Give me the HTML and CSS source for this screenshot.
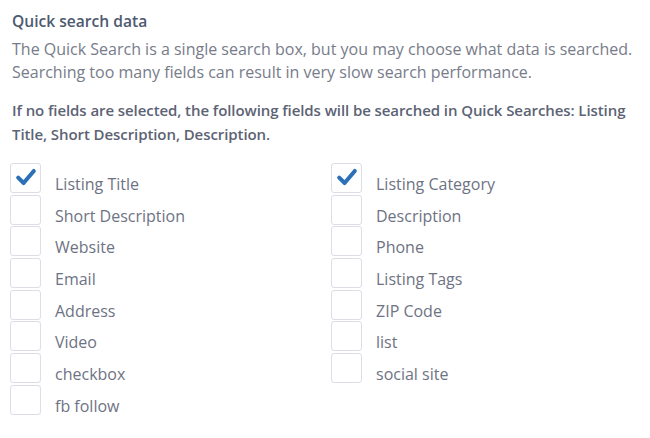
FILE: index.html
```html
<!DOCTYPE html>
<html>
<head>
<meta charset="utf-8">
<link rel="stylesheet" href="styles.css">
</head>
<body>
<div class="panel">
  <h3 class="title">Quick search data</h3>
  <p class="desc">The Quick Search is a single search box, but you may choose what data is searched. Searching too many fields can result in very slow search performance.</p>
  <p class="note">If no fields are selected, the following fields will be searched in Quick Searches: Listing Title, Short Description, Description.</p>
  <div class="fields">
    <label class="field"><span class="box checked"><svg viewBox="0 0 20 20" class="tick"><path d="M3.5 10.5 L8 15 L16.5 5" /></svg></span><span class="lbl">Listing Title</span></label>
    <label class="field"><span class="box checked"><svg viewBox="0 0 20 20" class="tick"><path d="M3.5 10.5 L8 15 L16.5 5" /></svg></span><span class="lbl">Listing Category</span></label>
    <label class="field"><span class="box"></span><span class="lbl">Short Description</span></label>
    <label class="field"><span class="box"></span><span class="lbl">Description</span></label>
    <label class="field"><span class="box"></span><span class="lbl">Website</span></label>
    <label class="field"><span class="box"></span><span class="lbl">Phone</span></label>
    <label class="field"><span class="box"></span><span class="lbl">Email</span></label>
    <label class="field"><span class="box"></span><span class="lbl">Listing Tags</span></label>
    <label class="field"><span class="box"></span><span class="lbl">Address</span></label>
    <label class="field"><span class="box"></span><span class="lbl">ZIP Code</span></label>
    <label class="field"><span class="box"></span><span class="lbl">Video</span></label>
    <label class="field"><span class="box"></span><span class="lbl">list</span></label>
    <label class="field"><span class="box"></span><span class="lbl">checkbox</span></label>
    <label class="field"><span class="box"></span><span class="lbl">social site</span></label>
    <label class="field"><span class="box"></span><span class="lbl">fb follow</span></label>
  </div>
</div>
</body>
</html>
```
FILE: styles.css
```css
html, body {
  margin: 0;
  padding: 0;
  background: #ffffff;
}
body {
  font-family: "Open Sans", "Noto Sans", sans-serif;
  font-size: 16px;
  color: #777c8a;
}
.panel {
  padding: 10px 10px 0 12px;
}
.title {
  margin: 0;
  font-size: 15.6px;
  font-weight: 600;
  line-height: 22px;
  color: #4e5a70;
}
.desc {
  margin: 5.5px 0 0;
  line-height: 23px;
  color: #777c8a;
}
.note {
  margin: 14.5px 0 0;
  font-size: 15px;
  letter-spacing: -0.08px;
  line-height: 24px;
  font-weight: 600;
  color: #5c6374;
}
.fields {
  margin: 17px 0 0 -2px;
  display: grid;
  grid-template-columns: 321px 1fr;
  grid-auto-rows: 31.7px;
}
.field {
  display: flex;
  align-items: flex-start;
  gap: 14px;
}
.box {
  box-sizing: border-box;
  width: 31px;
  height: 30px;
  border: 1px solid #dcdde6;
  border-radius: 3px;
  display: flex;
  align-items: flex-start;
  justify-content: center;
  flex: none;
}
.tick {
  width: 24px;
  height: 24px;
  margin-top: 1px;
}
.tick path {
  fill: none;
  stroke: #2c70b8;
  stroke-width: 3.4;
  stroke-linecap: round;
  stroke-linejoin: round;
}
.lbl {
  padding-top: 10px;
  line-height: 22px;
  color: #6e7384;
}
```
